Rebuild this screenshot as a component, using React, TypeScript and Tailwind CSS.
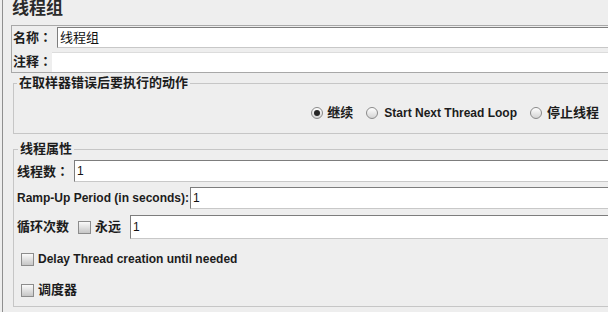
import React from "react";

const Radio = ({ checked }: { checked?: boolean }) => (
  <span className="w-[12px] h-[12px] rounded-full border border-[#8a8a8a] bg-linear-to-b from-white to-[#d4d4d4] flex items-center justify-center shrink-0">
    {checked && <span className="w-[6px] h-[6px] rounded-full bg-[#262626]" />}
  </span>
);

const Check = () => (
  <span className="w-[13px] h-[13px] border border-[#8c8c8c] bg-linear-to-b from-[#fafafa] to-[#c6c6c6] shrink-0" />
);

const Colon = () => <span className="font-['Noto_Sans_CJK_TC',sans-serif]">：</span>;

const Input = ({ value, h, cjk }: { value?: string; h: string; cjk?: boolean }) => (
  <div
    className={`flex-1 ${h} bg-white border-t border-l border-[#7d7d7d] border-b border-b-[#c8c8c8] flex items-center pl-[2px] font-normal ${cjk ? "text-[13px]" : "text-[12px]"} text-[#111]`}
  >
    {value}
  </div>
);

export default function App() {
  return (
    <div className="w-[608px] h-[312px] overflow-hidden bg-[#eeeeee] flex pl-[2px] font-bold text-[#1c1c1c] font-['Liberation_Sans','Noto_Sans_CJK_SC',sans-serif]">
      <div className="w-[640px] shrink-0 border-l border-[#8f8f8f] flex flex-col">
        <div className="h-[25px] shrink-0 pl-[9px] text-[17px] leading-[18px] text-[#2a2a2a]">线程组</div>

        <div className="ml-[8px] shrink-0 border border-[#a8a8a8] flex flex-col">
          <div className="flex items-center pt-[1px]">
            <span className="w-[45px] shrink-0 whitespace-nowrap pl-[1px] text-[13px] leading-[20px]">名称<Colon /></span>
            <Input h="h-[21px]" value="线程组" cjk />
          </div>
          <div className="flex items-center mt-[3px]">
            <span className="w-[40px] shrink-0 whitespace-nowrap pl-[1px] text-[13px] leading-[20px]">注释<Colon /></span>
            <div className="flex-1 h-[20px] bg-white border-t border-[#dcdcdc]" />
          </div>
        </div>

        <fieldset className="ml-[10px] mt-[3px] shrink-0 border border-[#c6c6c6]">
          <legend className="ml-[3px] px-[2px] text-[13px] leading-[14px]">在取样器错误后要执行的动作</legend>
          <div className="pt-[15px] pb-[12px] pr-[42px] flex justify-end items-center gap-[13px] text-[12px] leading-[16px]">
            <div className="flex items-center gap-[4px]">
              <Radio checked />
              <span className="text-[13px]">继续</span>
            </div>
            <div className="flex items-center gap-[6px]">
              <Radio />
              <span>Start Next Thread Loop</span>
            </div>
            <div className="flex items-center gap-[5px]">
              <Radio />
              <span className="text-[13px]">停止线程</span>
            </div>
          </div>
        </fieldset>

        <fieldset className="ml-[10px] mt-[8px] shrink-0 border border-[#c6c6c6]">
          <legend className="ml-[4px] px-[2px] text-[13px] leading-[14px]">线程属性</legend>
          <div className="flex flex-col pl-[3px] pb-[8px]">
            <div className="flex items-center mt-[4px]">
              <span className="w-[57px] shrink-0 whitespace-nowrap text-[13px] leading-[20px]">线程数<Colon /></span>
              <Input h="h-[22px]" value="1" />
            </div>
            <div className="flex items-center mt-[5px]">
              <span className="w-[173px] shrink-0 text-[12px] whitespace-nowrap">Ramp-Up Period (in seconds):</span>
              <Input h="h-[22px]" value="1" />
            </div>
            <div className="flex items-center mt-[6px]">
              <span className="w-[61px] shrink-0 text-[13px]">循环次数</span>
              <Check />
              <span className="ml-[4px] w-[35px] shrink-0 text-[13px]">永远</span>
              <Input h="h-[24px]" value="1" />
            </div>
            <div className="flex items-center mt-[12px] h-[16px] pl-[4px] gap-[4px] text-[12px]">
              <Check />
              <span>Delay Thread creation until needed</span>
            </div>
            <div className="flex items-center mt-[15px] h-[16px] pl-[4px] gap-[4px]">
              <Check />
              <span className="text-[13px]">调度器</span>
            </div>
          </div>
        </fieldset>
      </div>
    </div>
  );
}
